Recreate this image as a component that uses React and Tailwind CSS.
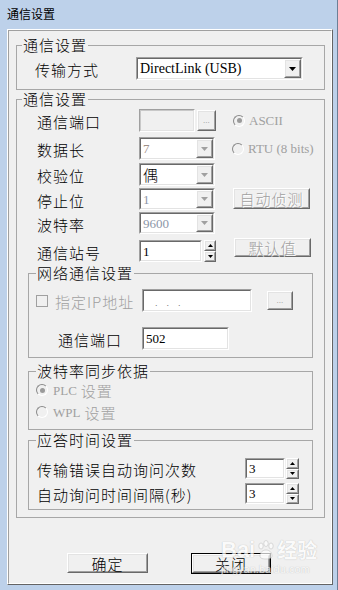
import React from "react";

// classic win32 3d edges
function Sunken({ className = "", inner = "bg-white", children }) {
  return (
    <div className={"border border-t-[#a0a0a0] border-l-[#a0a0a0] border-r-white border-b-white " + className}>
      <div className={"h-full flex items-center border border-t-[#696969] border-l-[#696969] border-r-[#e3e3e3] border-b-[#e3e3e3] " + inner}>
        {children}
      </div>
    </div>
  );
}

function Raised({ className = "", children }) {
  return (
    <div className={"border border-t-white border-l-white border-r-[#696969] border-b-[#696969] bg-[#f0f0f0] " + className}>
      <div className="h-full flex items-center justify-center border border-t-[#e3e3e3] border-l-[#e3e3e3] border-r-[#a0a0a0] border-b-[#a0a0a0]">
        {children}
      </div>
    </div>
  );
}

function Tri({ up = false, color = "#000", w = 7, h = 4 }) {
  const d = up ? `M0 ${h}L${w / 2} 0L${w} ${h}Z` : `M0 0H${w}L${w / 2} ${h}Z`;
  return (
    <svg width={w} height={h} viewBox={`0 0 ${w} ${h}`}>
      <path d={d} fill={color} />
    </svg>
  );
}

function Combo({ className = "", children, disabled }) {
  return (
    <Sunken className={className}>
      <div className="flex-1 pl-[2px] flex items-center">{children}</div>
      <Raised className="w-[17px] h-full">
        <Tri color={disabled ? "#a0a0a0" : "#000"} />
      </Raised>
    </Sunken>
  );
}

function Spin({ className = "" }) {
  return (
    <div className={"flex flex-col " + className}>
      <Raised className="flex-1">
        <Tri up w={5} h={3} />
      </Raised>
      <Raised className="flex-1">
        <Tri w={5} h={3} />
      </Raised>
    </div>
  );
}

function Radio({ on }) {
  return (
    <div className="w-[12px] h-[12px] shrink-0 rounded-full border border-t-[#8a8a8a] border-l-[#8a8a8a] border-r-white border-b-white bg-[#f0f0f0] flex items-center justify-center">
      {on && <div className="w-[5px] h-[5px] rounded-full bg-[#9a9a9a]" />}
    </div>
  );
}

const serif = "font-['Liberation_Serif',serif] text-[13px] leading-none";
const label = "text-[15px] leading-none tracking-[1px] mt-[2px]";
const legend = "px-[1px] text-[15px] leading-[16px] tracking-[1px]";
const dim = "text-[#a0a0a0]";

export default function App() {
  return (
    <div className="w-[338px] h-[590px] flex flex-col bg-[#bdd1ea] border-r border-r-[#6d7f96] text-black font-light font-['Noto_Sans_CJK_SC',sans-serif] overflow-hidden">
      <div className="h-[29px] flex items-center pl-[7px] text-[12px] font-normal leading-none pb-[1px]">通信设置</div>

      <div className="flex flex-1 pl-[7px] pr-[4px] pb-[5px]">
        <div className="flex-1 border border-t-white border-l-white border-r-[#646464] border-b-[#646464]">
          <div className="relative h-full flex flex-col border border-t-[#a0a0a0] border-l-[#a0a0a0] border-r-white border-b-white bg-[#f0f0f0]">
            {/* 传输方式 */}
            <fieldset className="ml-[7px] mt-[6px] w-[309px] border border-[#a7a7a7] pb-[9px]">
              <legend className={"ml-[5px] " + legend}>通信设置</legend>
              <div className="flex items-center mt-[4px] pl-[18px] h-[23px]">
                <span className={"w-[101px] " + label}>传输方式</span>
                <Combo className="w-[167px] h-[23px]">
                  <span className="font-['Liberation_Serif',serif] text-[14px] leading-none">DirectLink (USB)</span>
                </Combo>
              </div>
            </fieldset>

            {/* 通信设置 */}
            <fieldset className="ml-[7px] mt-[1px] w-[309px] border border-[#a7a7a7] pb-[7px]">
              <legend className={"ml-[5px] " + legend}>通信设置</legend>

              <div className="flex items-center mt-[2px] pl-[20px] h-[23px]">
                <span className={"w-[102px] " + label}>通信端口</span>
                <Sunken className="w-[56px] h-[23px]" inner="bg-[#f0f0f0] border-t-[#c8c8c8] border-l-[#c8c8c8]" />
                <Raised className="ml-[2px] w-[19px] h-[21px]">
                  <span className="text-[9px] leading-none text-[#a0a0a0] -mt-[3px]">...</span>
                </Raised>
                <div className="ml-[17px] flex items-center">
                  <Radio on />
                  <span className={"ml-[4px] " + serif + " " + dim}>ASCII</span>
                </div>
              </div>

              <div className="flex items-center mt-[5px] pl-[20px] h-[23px]">
                <span className={"w-[102px] " + label}>数据长</span>
                <Combo className="w-[76px] h-[23px]" disabled>
                  <span className={serif + " text-[#a09088]"}>7</span>
                </Combo>
                <div className="ml-[17px] flex items-center">
                  <Radio />
                  <span className={"ml-[4px] " + serif + " " + dim}>RTU (8 bits)</span>
                </div>
              </div>

              <div className="flex items-center mt-[3px] pl-[20px] h-[23px]">
                <span className={"w-[102px] " + label}>校验位</span>
                <Combo className="w-[76px] h-[23px]" disabled>
                  <span className="text-[15px] leading-none">偶</span>
                </Combo>
              </div>

              <div className="flex items-center mt-[2px] pl-[20px] h-[22px]">
                <span className={"w-[102px] " + label}>停止位</span>
                <Combo className="w-[76px] h-[22px]" disabled>
                  <span className={serif + " text-[#8c96a8]"}>1</span>
                </Combo>
                <Raised className="ml-[18px] w-[77px] h-[21px] self-start">
                  <span className="text-[15px] leading-none tracking-[1px] text-[#a0a0a0] [text-shadow:1px_1px_0_#fff]">自动侦测</span>
                </Raised>
              </div>

              <div className="flex items-center mt-[2px] pl-[20px] h-[22px]">
                <span className={"w-[102px] " + label}>波特率</span>
                <Combo className="w-[76px] h-[22px]" disabled>
                  <span className={serif + " text-[#8c96a8]"}>9600</span>
                </Combo>
              </div>

              <div className="flex items-center mt-[6px] pl-[20px] h-[22px]">
                <span className={"w-[102px] " + label}>通信站号</span>
                <Sunken className="w-[63px] h-[22px]">
                  <span className={"pl-[2px] " + serif}>1</span>
                </Sunken>
                <Spin className="ml-[2px] w-[12px] h-[22px]" />
                <Raised className="ml-[18px] w-[77px] h-[19px] self-start -mt-[2px]">
                  <span className="text-[15px] leading-none tracking-[1px] text-[#a0a0a0] [text-shadow:1px_1px_0_#fff]">默认值</span>
                </Raised>
              </div>

              {/* 网络通信设置 */}
              <fieldset className="ml-[11px] mt-[3px] w-[285px] border border-[#a7a7a7] pb-[7px]">
                <legend className={"ml-[7px] " + legend}>网络通信设置</legend>
                <div className="flex items-center mt-[8px] h-[23px]">
                  <div className="w-[113px] pl-[7px] flex items-center">
                    <div className="w-[12px] h-[12px] border border-[#a0a0a0] bg-[#f0f0f0]" />
                    <span className={"ml-[7px] " + label + " " + dim}>指定IP地址</span>
                  </div>
                  <Sunken className="w-[110px] h-[23px]">
                    <div className="pl-[11px] flex gap-[9px] text-[10px] leading-none text-[#707070] mt-[2px]">
                      <span>.</span>
                      <span>.</span>
                      <span>.</span>
                    </div>
                  </Sunken>
                  <Raised className="ml-[15px] w-[26px] h-[19px]">
                    <span className="text-[9px] leading-none text-[#a0a0a0] -mt-[3px]">...</span>
                  </Raised>
                </div>
                <div className="flex items-center mt-[15px] h-[23px]">
                  <span className={"pl-[29px] w-[113px] " + label}>通信端口</span>
                  <Sunken className="w-[87px] h-[23px]">
                    <span className={"pl-[2px] " + serif}>502</span>
                  </Sunken>
                </div>
              </fieldset>

              {/* 波特率同步依据 */}
              <fieldset className="ml-[11px] mt-[5px] w-[285px] border border-[#a7a7a7] pb-[9px]">
                <legend className={"ml-[7px] " + legend}>波特率同步依据</legend>
                <div className="flex items-center mt-[3px] h-[16px] pl-[7px]">
                  <Radio on />
                  <span className={"ml-[5px] flex items-center " + dim}>
                    <span className={serif}>PLC</span>
                    <span className="ml-[4px] text-[15px] leading-none tracking-[1px]">设置</span>
                  </span>
                </div>
                <div className="flex items-center mt-[6px] h-[16px] pl-[7px]">
                  <Radio />
                  <span className={"ml-[5px] flex items-center " + dim}>
                    <span className={serif}>WPL</span>
                    <span className="ml-[4px] text-[15px] leading-none tracking-[1px]">设置</span>
                  </span>
                </div>
              </fieldset>

              {/* 应答时间设置 */}
              <fieldset className="ml-[11px] mt-[2px] w-[285px] border border-[#a7a7a7] pb-[5px]">
                <legend className={"ml-[7px] " + legend}>应答时间设置</legend>
                <div className="flex items-center mt-[10px] h-[21px] pl-[8px]">
                  <span className={"w-[208px] " + label}>传输错误自动询问次数</span>
                  <Sunken className="w-[40px] h-[21px]">
                    <span className={"pl-[2px] " + serif}>3</span>
                  </Sunken>
                  <Spin className="ml-[1px] w-[13px] h-[21px]" />
                </div>
                <div className="flex items-center mt-[4px] h-[21px] pl-[8px]">
                  <span className={"w-[208px] " + label}>自动询问时间间隔(秒)</span>
                  <Sunken className="w-[40px] h-[21px]">
                    <span className={"pl-[2px] " + serif}>3</span>
                  </Sunken>
                  <Spin className="ml-[1px] w-[13px] h-[21px]" />
                </div>
              </fieldset>
            </fieldset>

            <div className="flex mt-[35px] pl-[58px]">
              <Raised className="w-[81px] h-[20px]">
                <span className="text-[15px] leading-none tracking-[1px]">确定</span>
              </Raised>
              <div className="ml-[43px] border border-black">
                <Raised className="w-[78px] h-[19px]">
                  <span className="text-[15px] leading-none tracking-[1px]">关闭</span>
                </Raised>
              </div>
            </div>

            {/* baidu watermark */}
            <div className="absolute left-[212px] top-[508px] flex flex-col items-start opacity-70 pointer-events-none">
              <div className="flex items-center text-white [text-shadow:0_0_1px_#9a9a9a]">
                <span className="font-['Liberation_Sans',sans-serif] text-[22px] leading-none font-bold">Bai</span>
                <svg width="20" height="20" viewBox="0 0 20 20" className="mx-[1px]">
                  <g fill="#fff" stroke="#b0b0b0" strokeWidth="0.6">
                    <ellipse cx="5" cy="6" rx="2.2" ry="3" />
                    <ellipse cx="10" cy="3.5" rx="2.2" ry="3" />
                    <ellipse cx="15" cy="6" rx="2.2" ry="3" />
                    <path d="M4 16c0-4 3-6 6-6s6 2 6 6c0 2-2 3-6 3s-6-1-6-3z" />
                  </g>
                </svg>
                <span className="text-[20px] leading-none font-bold">经验</span>
              </div>
              <span className="mt-[3px] font-['Liberation_Sans',sans-serif] text-[11px] leading-none text-white [text-shadow:0_0_1px_#9a9a9a]">jingyan.baidu.com</span>
            </div>
          </div>
        </div>
      </div>
    </div>
  );
}
